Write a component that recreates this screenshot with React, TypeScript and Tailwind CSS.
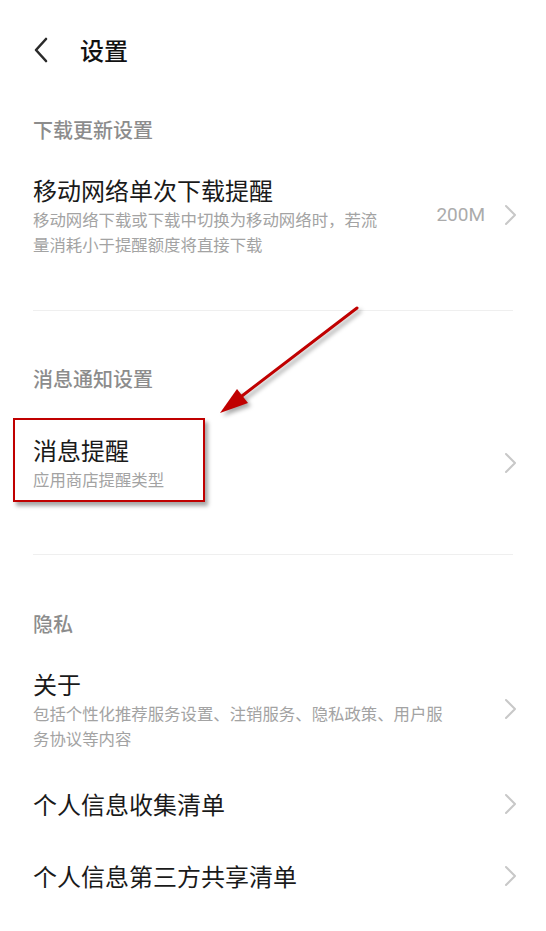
import React from 'react';

const CJK = { fontFamily: '"Noto Sans CJK SC", "Noto Sans", sans-serif' };

function ChevronRight() {
  return (
    <svg width="14" height="22" viewBox="0 0 14 22" className="shrink-0">
      <path d="M3 2 L12 11 L3 20" fill="none" stroke="#c8c8c8" strokeWidth="2" strokeLinecap="round" strokeLinejoin="round" />
    </svg>
  );
}

function SectionTitle({ children, className = '' }: { children: React.ReactNode; className?: string }) {
  return (
    <div className={`px-[33px] text-[20px] leading-[28px] font-medium text-[#8c8c8c] ${className}`}>
      {children}
    </div>
  );
}

function Item({
  title,
  sub,
  value,
  className = '',
}: {
  title: string;
  sub?: string;
  value?: string;
  className?: string;
}) {
  return (
    <div className={`flex items-center pl-[33px] pr-[29px] ${className}`}>
      <div className="flex min-w-0 flex-1 flex-col pr-[48px]">
        <div className="text-[24px] leading-[34px] text-[#1a1a1a]">{title}</div>
        {sub ? <div className="text-[16.4px] leading-[25px] text-[#a3a3a3]">{sub}</div> : null}
      </div>
      {value ? (
        <span
          className="mr-[18px] text-[19px] text-[#ababab]"
          style={{ fontFamily: 'Roboto, "Noto Sans CJK SC", sans-serif' }}
        >
          {value}
        </span>
      ) : null}
      <ChevronRight />
    </div>
  );
}

function Divider({ className = '' }: { className?: string }) {
  return <div className={`mx-[33px] h-px bg-[#efefef] ${className}`} />;
}

export default function App() {
  return (
    <div className="relative h-[931px] w-[546px] overflow-hidden bg-white" style={CJK}>
      {/* header */}
      <div className="flex h-[100px] items-center px-[33px]">
        <svg width="16" height="26" viewBox="0 0 16 26">
          <path d="M13 2 L3 13 L13 24" fill="none" stroke="#2a2a2a" strokeWidth="2.6" strokeLinecap="round" strokeLinejoin="round" />
        </svg>
        <span className="ml-[31px] text-[24px] font-medium text-[#111]">设置</span>
      </div>

      <SectionTitle className="mt-[16px]">下载更新设置</SectionTitle>
      <Item
        className="mt-[29px]"
        title="移动网络单次下载提醒"
        sub="移动网络下载或下载中切换为移动网络时，若流量消耗小于提醒额度将直接下载"
        value="200M"
      />
      <Divider className="mt-[53px]" />

      <SectionTitle className="mt-[54px]">消息通知设置</SectionTitle>
      <Item className="mt-[40px]" title="消息提醒" sub="应用商店提醒类型" />
      <Divider className="mt-[62px]" />

      <SectionTitle className="mt-[55px]">隐私</SectionTitle>
      <Item
        className="mt-[29px]"
        title="关于"
        sub="包括个性化推荐服务设置、注销服务、隐私政策、用户服务协议等内容"
      />
      <Item className="mt-[36px]" title="个人信息收集清单" />
      <Item className="mt-[38px]" title="个人信息第三方共享清单" />

      {/* annotation overlay */}
      <div className="pointer-events-none absolute left-[13px] top-[418px] h-[84px] w-[192px] border-2 border-[#c00000] shadow-[3px_4px_4px_rgba(0,0,0,0.35)]" />
      <svg
        className="pointer-events-none absolute left-0 top-0"
        width="546"
        height="931"
        viewBox="0 0 546 931"
        style={{ filter: 'drop-shadow(3px 3px 2px rgba(0,0,0,0.35))' }}
      >
        <line x1="357" y1="308" x2="238" y2="399" stroke="#c00000" strokeWidth="3" strokeLinecap="round" />
        <polygon points="220,413 248,403 237,389" fill="#c00000" />
      </svg>
    </div>
  );
}
